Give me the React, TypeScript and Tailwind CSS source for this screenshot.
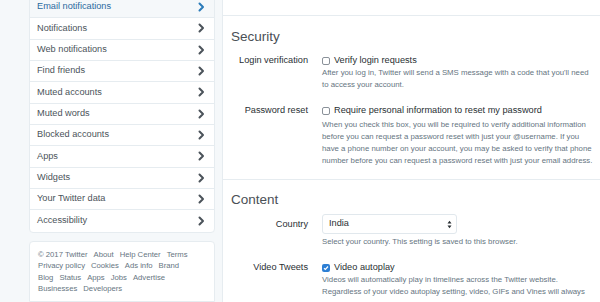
import React from 'react';

const navItems = [
  'Email notifications',
  'Notifications',
  'Web notifications',
  'Find friends',
  'Muted accounts',
  'Muted words',
  'Blocked accounts',
  'Apps',
  'Widgets',
  'Your Twitter data',
  'Accessibility',
];

const footerLines = [
  ['© 2017 Twitter', 'About', 'Help Center', 'Terms'],
  ['Privacy policy', 'Cookies', 'Ads info', 'Brand'],
  ['Blog', 'Status', 'Apps', 'Jobs', 'Advertise'],
  ['Businesses', 'Developers'],
];

const Chevron: React.FC<{ active?: boolean }> = ({ active }) => (
  <svg width="7" height="10" viewBox="0 0 7 10" className="shrink-0">
    <path
      d="M1.5 1.5 L5 5 L1.5 8.5"
      fill="none"
      stroke={active ? '#2b7bb9' : '#4b535a'}
      strokeWidth="2"
      strokeLinecap="round"
      strokeLinejoin="round"
    />
  </svg>
);

const Checkbox: React.FC<{ checked?: boolean }> = ({ checked }) =>
  checked ? (
    <span className="w-[8px] h-[8px] rounded-[2px] bg-[#2d7fd4] flex items-center justify-center shrink-0">
      <svg width="6" height="6" viewBox="0 0 6 6">
        <path d="M1 3.2 L2.4 4.5 L5 1.5" fill="none" stroke="#fff" strokeWidth="1.2" />
      </svg>
    </span>
  ) : (
    <span className="w-[8px] h-[8px] rounded-[2px] border border-[#8a9199] bg-white shrink-0" />
  );

const Row: React.FC<{ label: string; children: React.ReactNode; className?: string; labelClass?: string }> = ({
  label,
  children,
  className,
  labelClass,
}) => (
  <div className={`flex ${className ?? ''}`}>
    <div className={`w-[77px] shrink-0 text-right text-[9.2px] text-[#292f33] ${labelClass ?? 'leading-[13px]'}`}>
      {label}
    </div>
    <div className="ml-[14px] flex-1">{children}</div>
  </div>
);

const Help: React.FC<{ lines: string[]; className?: string }> = ({ lines, className }) => (
  <div className={`text-[7.8px] leading-[12px] text-[#66757f] ${className ?? ''}`}>
    {lines.map(l => (
      <div key={l} className="whitespace-nowrap">{l}</div>
    ))}
  </div>
);

export default function App() {
  return (
    <div
      className="w-[600px] h-[302px] overflow-hidden bg-[#f5f8fa] flex"
      style={{ fontFamily: '"Liberation Sans", Arial, sans-serif' }}
    >
      {/* Sidebar */}
      <div className="w-[186px] ml-[29px] shrink-0 flex flex-col">
        <div className="-mt-[4px] bg-white border border-[#e6ecf0] rounded-b-[4px] overflow-hidden">
          {navItems.map((item, i) => (
            <div
              key={item}
              className={`h-[21.33px] flex items-center justify-between pl-[7px] pr-[9px] ${
                i < navItems.length - 1 ? 'border-b border-[#e6ecf0]' : ''
              } ${i === 0 ? 'bg-[#f5f8fa]' : ''}`}
            >
              <span className={`text-[9.2px] ${i === 0 ? 'text-[#2b6a9e]' : 'text-[#4b535a]'}`}>{item}</span>
              <Chevron active={i === 0} />
            </div>
          ))}
        </div>

        <div className="mt-[8px] flex-1 bg-white border border-[#e6ecf0] rounded-t-[4px] pt-[7px] pl-[8px]">
          {footerLines.map((line, i) => (
            <div key={i} className="text-[7.7px] leading-[11.6px] text-[#66757f] whitespace-nowrap">
              {line.map(t => (
                <span key={t} className="mr-[6px]">{t}</span>
              ))}
            </div>
          ))}
        </div>
      </div>

      {/* Main panel */}
      <div className="ml-[7px] flex-1 bg-white border-l border-[#e6ecf0]">
        <div className="h-[16px] border-b border-[#e6ecf0]" />

        <div className="pl-[8px] pt-[13px] pb-[12px] border-b border-[#e6ecf0]">
          <h2 className="text-[13.5px] leading-[16px] text-[#4a5056]">Security</h2>

          <Row label="Login verification" className="mt-[9px]">
            <label className="flex items-center gap-[4px] h-[13px] text-[9.2px] text-[#292f33]">
              <Checkbox />
              Verify login requests
            </label>
            <Help
              lines={[
                "After you log in, Twitter will send a SMS message with a code that you'll need",
                'to access your account.',
              ]}
            />
          </Row>

          <Row label="Password reset" className="mt-[13px]">
            <label className="flex items-center gap-[4px] h-[13px] text-[9.2px] text-[#292f33]">
              <Checkbox />
              Require personal information to reset my password
            </label>
            <Help
              className="mt-[2px]"
              lines={[
                'When you check this box, you will be required to verify additional information',
                'before you can request a password reset with just your @username. If you',
                'have a phone number on your account, you may be asked to verify that phone',
                'number before you can request a password reset with just your email address.',
              ]}
            />
          </Row>
        </div>

        <div className="pl-[8px] pt-[12px]">
          <h2 className="text-[13.5px] leading-[16px] text-[#4a5056]">Content</h2>

          <Row label="Country" className="mt-[6px]" labelClass="leading-[20px]">
            <div className="w-[135px] h-[20px] border border-[#e1e8ed] rounded-[3px] flex items-center justify-between pl-[6px] pr-[4px]">
              <span className="text-[9.2px] text-[#292f33]">India</span>
              <svg width="5" height="9" viewBox="0 0 5 9">
                <path d="M0.5 3.5 L2.5 0.8 L4.5 3.5 Z M0.5 5.5 L2.5 8.2 L4.5 5.5 Z" fill="#292f33" />
              </svg>
            </div>
            <Help className="mt-[2px]" lines={['Select your country. This setting is saved to this browser.']} />
          </Row>

          <Row label="Video Tweets" className="mt-[13px]">
            <label className="flex items-center gap-[4px] h-[13px] text-[9.2px] text-[#292f33]">
              <Checkbox checked />
              Video autoplay
            </label>
            <Help
              lines={[
                'Videos will automatically play in timelines across the Twitter website.',
                'Regardless of your video autoplay setting, video, GIFs and Vines will always',
              ]}
            />
          </Row>
        </div>
      </div>
    </div>
  );
}
